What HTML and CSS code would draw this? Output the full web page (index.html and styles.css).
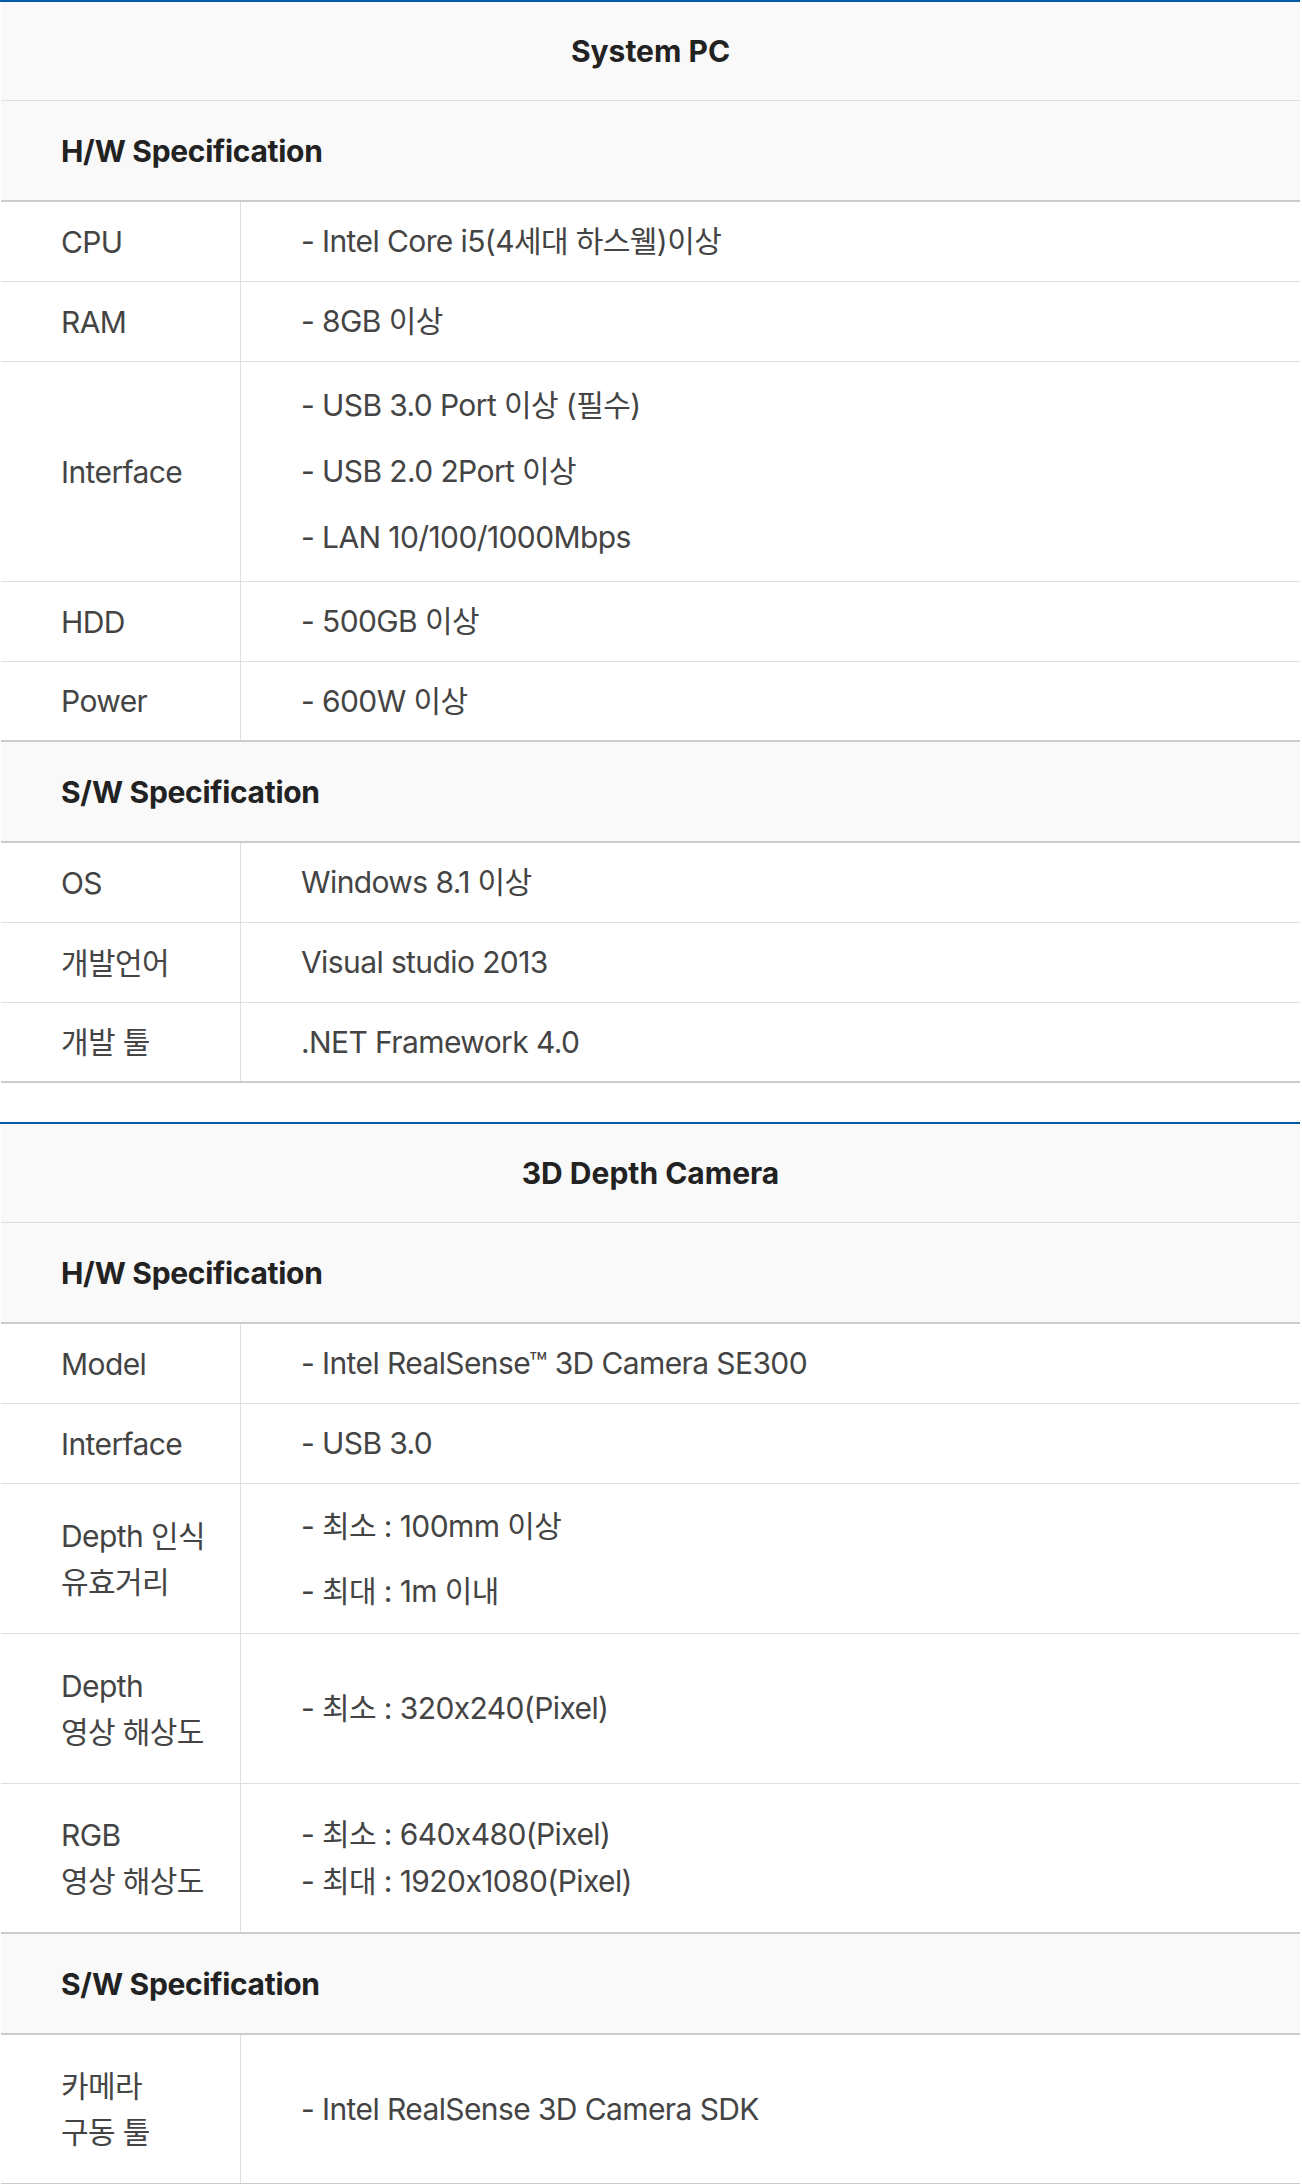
FILE: index.html
```html
<!DOCTYPE html>
<html lang="ko">
<head>
<meta charset="utf-8">
<title>Spec</title>
<link rel="stylesheet" href="styles.css">
</head>
<body>
<section class="spec">
  <div class="spec-title">System PC</div>
  <div class="spec-sec">H/W Specification</div>
  <div class="row"><div class="lbl">CPU</div><div class="val">- Intel Core i5(4세대 하스웰)이상</div></div>
  <div class="row"><div class="lbl">RAM</div><div class="val">- 8GB 이상</div></div>
  <div class="row"><div class="lbl">Interface</div><div class="val list">
    <p>- USB 3.0 Port 이상 (필수)</p>
    <p>- USB 2.0 2Port 이상</p>
    <p>- LAN 10/100/1000Mbps</p>
  </div></div>
  <div class="row"><div class="lbl">HDD</div><div class="val">- 500GB 이상</div></div>
  <div class="row last"><div class="lbl">Power</div><div class="val">- 600W 이상</div></div>
  <div class="spec-sec">S/W Specification</div>
  <div class="row"><div class="lbl">OS</div><div class="val">Windows 8.1 이상</div></div>
  <div class="row"><div class="lbl">개발언어</div><div class="val">Visual studio 2013</div></div>
  <div class="row last"><div class="lbl">개발 툴</div><div class="val">.NET Framework 4.0</div></div>
</section>

<section class="spec">
  <div class="spec-title">3D Depth Camera</div>
  <div class="spec-sec">H/W Specification</div>
  <div class="row"><div class="lbl">Model</div><div class="val">- Intel RealSense™ 3D Camera SE300</div></div>
  <div class="row"><div class="lbl">Interface</div><div class="val">- USB 3.0</div></div>
  <div class="row tall"><div class="lbl">Depth 인식<br>유효거리</div><div class="val list compact">
    <p>- 최소 : 100mm 이상</p>
    <p>- 최대 : 1m 이내</p>
  </div></div>
  <div class="row tall"><div class="lbl">Depth<br>영상 해상도</div><div class="val">- 최소 : 320x240(Pixel)</div></div>
  <div class="row tall last"><div class="lbl">RGB<br>영상 해상도</div><div class="val">- 최소 : 640x480(Pixel)<br>- 최대 : 1920x1080(Pixel)</div></div>
  <div class="spec-sec">S/W Specification</div>
  <div class="row tall last"><div class="lbl">카메라<br>구동 툴</div><div class="val">- Intel RealSense 3D Camera SDK</div></div>
</section>
</body>
</html>
```
FILE: styles.css
```css
html, body {
  margin: 0;
  padding: 0;
  background: #fff;
}
body {
  font-family: Inter, "Noto Sans CJK KR", "Noto Sans", sans-serif;
  font-size: 30px;
  color: #444;
  letter-spacing: -0.02em;
}
.spec {
  width: 1300px;
  border-top: 2px solid #0059a9;
  box-sizing: border-box;
}
.spec + .spec {
  margin-top: 39px;
}
.spec-title {
  height: 99px;
  box-sizing: border-box;
  display: flex;
  align-items: center;
  justify-content: center;
  background: #f9f9f9;
  border-bottom: 1px solid #dedede;
  font-weight: 700;
  color: #222;
  letter-spacing: 0;
  margin-left: 1px;
}
.spec-sec {
  height: 101px;
  box-sizing: border-box;
  display: flex;
  align-items: center;
  padding-left: 60px;
  background: #f9f9f9;
  border-bottom: 2px solid #cccccc;
  font-weight: 700;
  color: #222;
  letter-spacing: -0.01em;
  margin-left: 1px;
}
.row {
  display: grid;
  grid-template-columns: 240px 1fr;
  min-height: 80px;
  box-sizing: border-box;
  border-bottom: 1px solid #dedede;
  margin-left: 1px;
}
.row.tall {
  min-height: 150px;
}
.row.last {
  border-bottom: 2px solid #cccccc;
}
.lbl {
  display: flex;
  align-items: center;
  padding-left: 60px;
  border-right: 1px solid #dedede;
  line-height: 46px;
}
.val {
  display: flex;
  flex-direction: column;
  justify-content: center;
  padding: 0 0 0 60px;
  line-height: 47px;
}
.val.list {
  padding-top: 20px;
  padding-bottom: 21px;
  gap: 20px;
}
.val.list.compact {
  padding-top: 19px;
  padding-bottom: 19px;
  gap: 19px;
}
.val.list p {
  margin: 0;
  line-height: 46px;
}
```
